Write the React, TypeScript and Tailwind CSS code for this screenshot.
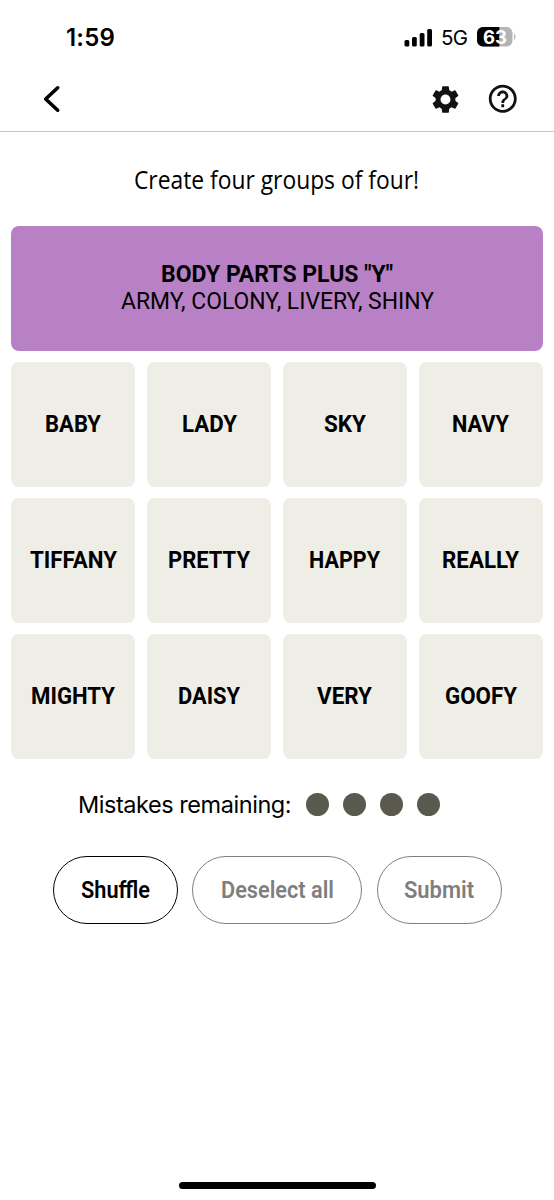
import React from 'react';
import { clsx } from 'clsx';
import { MdHelpOutline, MdSettings } from 'react-icons/md';

const words = [
  { text: 'BABY', width: 56 },
  { text: 'LADY', width: 55 },
  { text: 'SKY', width: 42 },
  { text: 'NAVY', width: 57 },
  { text: 'TIFFANY', width: 87 },
  { text: 'PRETTY', width: 82 },
  { text: 'HAPPY', width: 71 },
  { text: 'REALLY', width: 77 },
  { text: 'MIGHTY', width: 84 },
  { text: 'DAISY', width: 62 },
  { text: 'VERY', width: 55 },
  { text: 'GOOFY', width: 72 },
];

// SVG text keeps a word at a fixed measure whatever the font
const Label = ({
  text,
  width,
  className,
}: {
  text: string;
  width: number;
  className?: string;
}) => (
  <svg
    width={width}
    height="32"
    className={clsx('overflow-visible fill-current', className)}
  >
    <text
      x="0"
      y="24"
      textLength={width}
      lengthAdjust="spacingAndGlyphs"
    >
      {text}
    </text>
  </svg>
);

const StatusBar = () => {
  return (
    <div className="flex h-[74px] items-center justify-between pr-[38px] pl-[66px] font-['Inter']">
      <span className="pt-0.5 text-[24px] font-semibold tracking-[0.2px]">
        1:59
      </span>
      <div className="flex items-center">
        <svg
          width="29"
          height="19"
          viewBox="0 0 29 19"
        >
          <rect x="0.5" y="12" width="4.8" height="6.5" rx="1.5" />
          <rect x="8" y="9" width="4.8" height="9.5" rx="1.5" />
          <rect x="15.7" y="5" width="4.8" height="13.5" rx="1.5" />
          <rect x="23.2" y="1" width="4.8" height="17.5" rx="1.5" />
        </svg>
        <span className="ml-2 w-[26px] pt-0.5 text-[20.5px] tracking-[-0.8px]">
          5G
        </span>
        <svg
          width="39"
          height="20"
          viewBox="0 0 39 20"
          className="ml-2.5"
        >
          <defs>
            <clipPath id="battery">
              <rect width="35.5" height="19.5" rx="6" />
            </clipPath>
          </defs>
          <g clipPath="url(#battery)">
            <rect width="36" height="20" fill="#b4b4b4" />
            <rect width="22.3" height="20" fill="#000" />
          </g>
          <path d="M37 6.5q1.5 1 1.5 3.25T37 13z" fill="#b4b4b4" />
          <text
            x="6"
            y="16.5"
            fill="#fff"
            className="text-[18.5px] font-bold"
          >
            63
          </text>
        </svg>
      </div>
    </div>
  );
};

const Header = () => {
  return (
    <header className="flex h-[58px] items-center justify-between border-b border-[#c4c4c4] pr-[34.5px] pb-[7px] pl-[42px]">
      <button aria-label="Back">
        <svg
          width="20"
          height="30"
          viewBox="0 0 20 30"
          fill="none"
          stroke="#000"
          strokeWidth="3.6"
          strokeLinecap="round"
          strokeLinejoin="round"
        >
          <path d="M15.7 3.8 3.7 15l12 11.2" />
        </svg>
      </button>
      <div className="flex items-center gap-6 text-[#121212]">
        <MdSettings size={33} />
        <MdHelpOutline size={33.5} />
      </div>
    </header>
  );
};

const App = () => {
  return (
    <div className="flex h-[1200px] w-[554px] flex-col bg-white font-['Roboto',sans-serif] text-black">
      <StatusBar />
      <Header />
      <main className="flex flex-1 flex-col px-[11px]">
        <div className="flex h-[94px] items-center justify-center pt-1 pr-0.5">
          <Label
            text="Create four groups of four!"
            width={285}
            className="font-['Open_Sans',sans-serif] text-[25px]"
          />
        </div>
        <section className="flex h-[124.5px] flex-col items-center justify-center rounded-lg bg-[#b981c5] pb-0.5">
          <Label
            text={'BODY PARTS PLUS "Y"'}
            width={232}
            className="-mb-[5px] text-[23.5px] font-bold"
          />
          <Label
            text="ARMY, COLONY, LIVERY, SHINY"
            width={313}
            className="text-[23.5px]"
          />
        </section>
        <section className="mt-[11.7px] grid grid-cols-4 gap-[11.7px]">
          {words.map((word) => (
            <button
              key={word.text}
              className="flex h-[124.4px] items-center justify-center rounded-lg bg-[#efeee6] pb-px"
            >
              <Label
                text={word.text}
                width={word.width}
                className="text-[23.5px] font-bold"
              />
            </button>
          ))}
        </section>
        <div className="mt-[30px] flex h-8 items-center pl-[67px]">
          <span className="w-[213px] font-['Inter'] text-[23.5px] tracking-[-0.45px] whitespace-nowrap">
            Mistakes remaining:
          </span>
          <div className="ml-[15px] flex gap-3.5">
            {[0, 1, 2, 3].map((dot) => (
              <span
                key={dot}
                className="size-[23px] rounded-full bg-[#5a594e]"
              />
            ))}
          </div>
        </div>
        <div className="mt-[35px] flex justify-center gap-[14.5px] text-[23.5px] font-semibold">
          <button className="flex h-[68px] w-[125px] items-center justify-center rounded-full border-[1.5px] border-black">
            <Label text="Shuffle" width={69} />
          </button>
          <button className="flex h-[68px] w-[170px] items-center justify-center rounded-full border-[1.5px] border-[#7f7f7f] text-[#7f7f7f]">
            <Label text="Deselect all" width={113} />
          </button>
          <button className="flex h-[68px] w-[125px] items-center justify-center rounded-full border-[1.5px] border-[#7f7f7f] text-[#7f7f7f]">
            <Label text="Submit" width={70} />
          </button>
        </div>
      </main>
      <div className="mb-[11.5px] h-[7px] w-[197px] self-center rounded-full bg-black" />
    </div>
  );
};

export default App;
